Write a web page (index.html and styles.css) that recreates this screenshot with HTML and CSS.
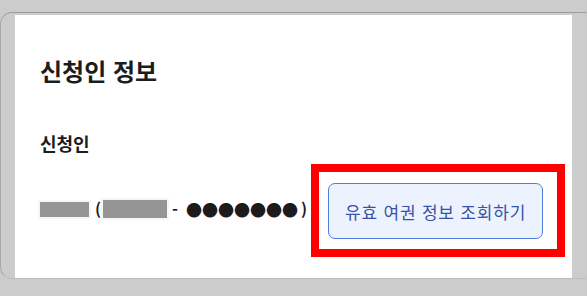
FILE: index.html
```html
<!DOCTYPE html>
<html lang="ko">
<head>
<meta charset="utf-8">
<title>신청인 정보</title>
<link rel="stylesheet" href="styles.css">
</head>
<body>
<div class="frame">
  <section class="panel">
    <h2 class="title">신청인 정보</h2>
    <h3 class="label">신청인</h3>
    <div class="row">
      <div class="info">
        <span class="mask mask-name"></span><span class="paren">(</span><span class="mask mask-birth"></span><span class="dash">-</span><span class="dots">●●●●●●●</span><span class="paren-close">)</span>
      </div>
      <div class="highlight">
        <button class="btn" type="button">유효 여권 정보 조회하기</button>
      </div>
    </div>
  </section>
</div>
</body>
</html>
```
FILE: styles.css
```css
html, body {
  margin: 0;
  padding: 0;
}
body {
  background: #cccccc;
  width: 587px;
  height: 296px;
  overflow: hidden;
  font-family: "Noto Sans CJK KR", "Noto Sans", sans-serif;
  color: #1c1c1c;
}
.frame {
  margin-top: 12px;
  border-top: 1px solid #9c9c9c;
  border-left: 1px solid #a8a8a8;
  border-bottom: 1px solid #bcbcbc;
  border-radius: 12px 0 0 12px;
  padding: 2px 0 0 14px;
}
.panel {
  box-sizing: border-box;
  width: 557px;
  height: 263px;
  background: #ffffff;
  padding: 40px 0 0 25px;
}
.title {
  margin: 0;
  font-size: 24px;
  line-height: 32px;
  font-weight: 700;
}
.label {
  margin: 43px 0 0;
  font-size: 18px;
  line-height: 26px;
  font-weight: 700;
}
.row {
  margin-top: 8px;
  display: flex;
  align-items: center;
}
.info {
  display: flex;
  align-items: center;
  font-size: 16px;
  line-height: 24px;
  font-weight: 700;
  margin-bottom: 4px;
}
.mask {
  display: inline-block;
  background: #959595;
  box-shadow: 0 0 0 2px #f6f6f6;
}
.mask-name {
  width: 49px;
  height: 15px;
  margin-top: 2px;
}
.paren {
  margin-left: 6px;
}
.mask-birth {
  width: 64px;
  height: 18px;
  margin-left: 2px;
}
.dash {
  margin-left: 5px;
}
.dots {
  margin-left: 8px;
}
.paren-close {
  margin-left: 3px;
}
.highlight {
  margin-left: 4px;
  border: 8px solid #ff0000;
  padding: 11px 14px 10px 9px;
  display: flex;
}
.btn {
  box-sizing: border-box;
  width: 215px;
  height: 56px;
  border: 1px solid #4a7fdc;
  border-radius: 7px;
  background: #edf3fe;
  color: #3552a8;
  font-family: "Noto Sans CJK KR", "Noto Sans", sans-serif;
  font-size: 17px;
  letter-spacing: 0.8px;
  font-weight: 400;
  padding: 0;
  margin: 0;
}
```
